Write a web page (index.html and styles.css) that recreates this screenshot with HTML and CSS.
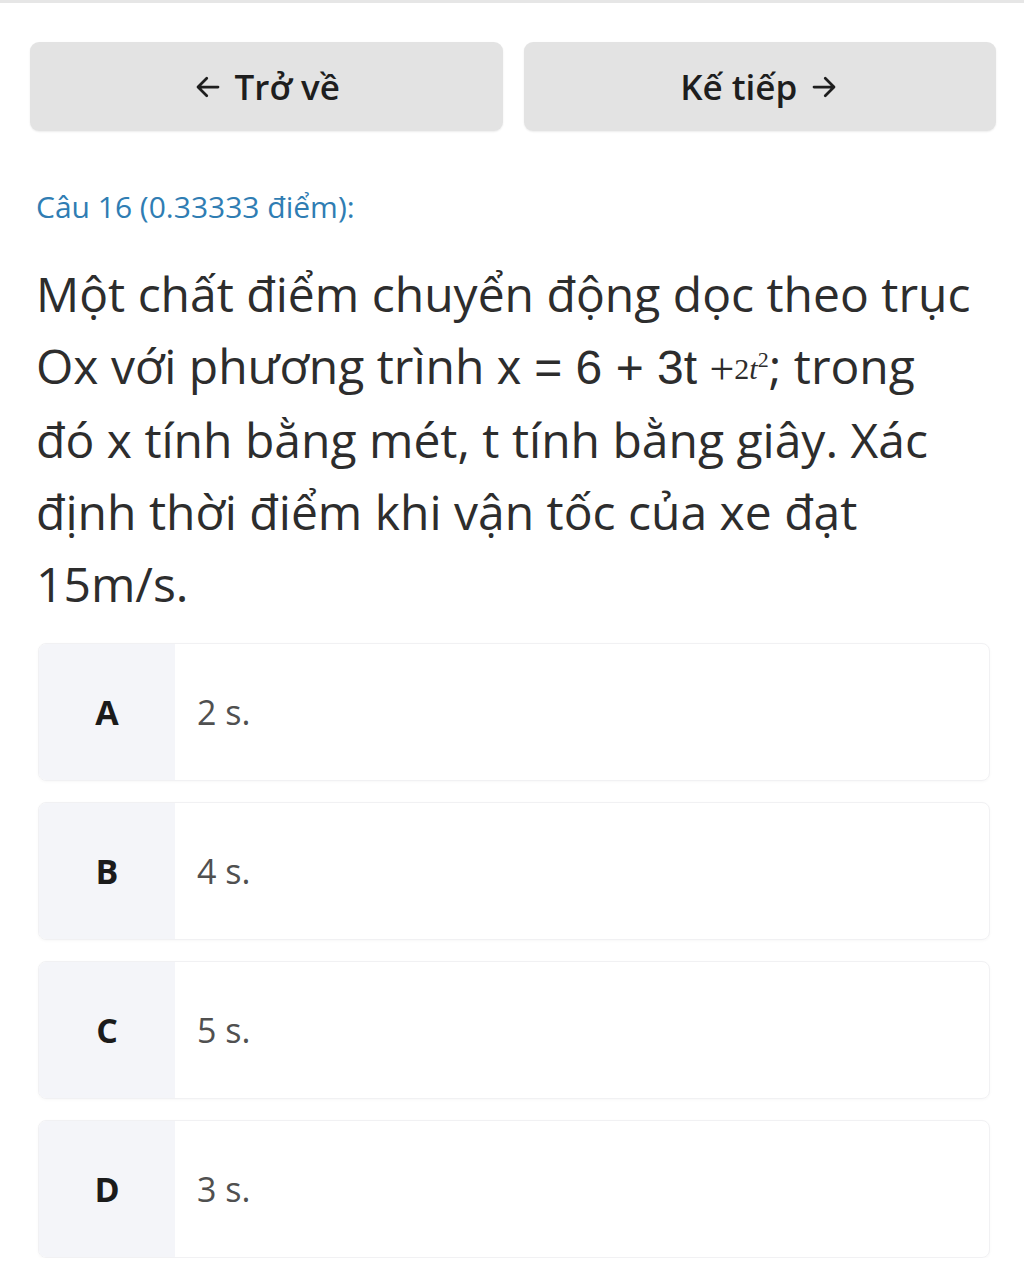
FILE: index.html
```html
<!DOCTYPE html>
<html lang="vi">

<head>
    <meta charset="UTF-8">
    <meta name="viewport" content="width=device-width, initial-scale=1.0">
    <title>Câu 16</title>
    <link rel="stylesheet" href="styles.css">
</head>

<body>
    <div class="topline"></div>
    <div class="container">
        <div class="nav">
            <button class="nav-btn">
                <svg class="arrow" viewBox="0 0 24 24" width="30" height="30"><path d="M20 12H5M11 5l-7 7 7 7" /></svg>
                <span>Trở về</span>
            </button>
            <button class="nav-btn">
                <span>Kế tiếp</span>
                <svg class="arrow" viewBox="0 0 24 24" width="30" height="30"><path d="M4 12h15M13 5l7 7-7 7" /></svg>
            </button>
        </div>

        <p class="q-label">Câu 16 (0.33333 điểm):</p>

        <p class="q-text">Một chất điểm chuyển động dọc theo trục Ox với phương trình <span class="eq">x = 6 + 3t</span> <span class="math"><span class="plus">+</span><span class="term">2<i>t</i><sup>2</sup></span></span>; trong đó x tính bằng mét, t tính bằng giây. Xác định thời điểm khi vận tốc của xe đạt 15m/s.</p>

        <div class="answers">
            <div class="answer">
                <div class="letter">A</div>
                <div class="answer-text">2 s.</div>
            </div>
            <div class="answer">
                <div class="letter">B</div>
                <div class="answer-text">4 s.</div>
            </div>
            <div class="answer">
                <div class="letter">C</div>
                <div class="answer-text">5 s.</div>
            </div>
            <div class="answer">
                <div class="letter">D</div>
                <div class="answer-text">3 s.</div>
            </div>
        </div>
    </div>
</body>

</html>
```

FILE: styles.css
```css
body {
    margin: 0;
    font-family: "Open Sans", "Noto Sans", sans-serif;
    background-color: #ffffff;
    color: #222222;
}

.topline {
    height: 3px;
    background-color: #e6e6e6;
}

.container {
    padding: 39px 28px 0 30px;
}

.nav {
    display: flex;
    gap: 21px;
}

.nav-btn {
    flex: 1;
    height: 89px;
    display: flex;
    align-items: center;
    justify-content: center;
    gap: 12px;
    border: none;
    border-radius: 9px;
    background-color: #e3e3e3;
    color: #1e1e1e;
    font-family: "Open Sans", sans-serif;
    font-size: 35px;
    font-weight: 600;
    box-shadow: 0 1px 2px rgba(0, 0, 0, 0.08);
}

.arrow {
    fill: none;
    stroke: #1e1e1e;
    stroke-width: 2.2;
    stroke-linecap: round;
    stroke-linejoin: round;
}

.q-label {
    margin: 56px 0 0 6px;
    font-size: 30px;
    line-height: 40px;
    color: #2f7db3;
}

.q-text {
    margin: 31px 20px 0 6px;
    font-size: 48px;
    line-height: 72px;
    color: #2d2d2d;
}

.eq {
    font-family: "Liberation Sans", Arial, sans-serif;
    font-size: 48px;
}

.math {
    font-family: "Liberation Serif", serif;
    line-height: 0;
}

.plus {
    font-size: 44px;
}

.term {
    font-size: 30px;
    position: relative;
    top: -5px;
}

.math sup {
    font-size: 22px;
    vertical-align: 12px;
    line-height: 0;
}

.answers {
    margin: 23px 6px 0 8px;
    display: flex;
    flex-direction: column;
    gap: 21px;
}

.answer {
    display: flex;
    height: 136px;
    border: 1px solid #f1f1f3;
    border-radius: 8px;
    overflow: hidden;
    box-shadow: 0 1px 3px rgba(0, 0, 0, 0.03);
}

.letter {
    width: 136px;
    display: flex;
    align-items: center;
    justify-content: center;
    background-color: #f4f5f9;
    font-size: 34px;
    font-weight: 700;
    color: #1b1b1b;
}

.answer-text {
    display: flex;
    align-items: center;
    padding-left: 22px;
    font-size: 34px;
    color: #505050;
}
```
